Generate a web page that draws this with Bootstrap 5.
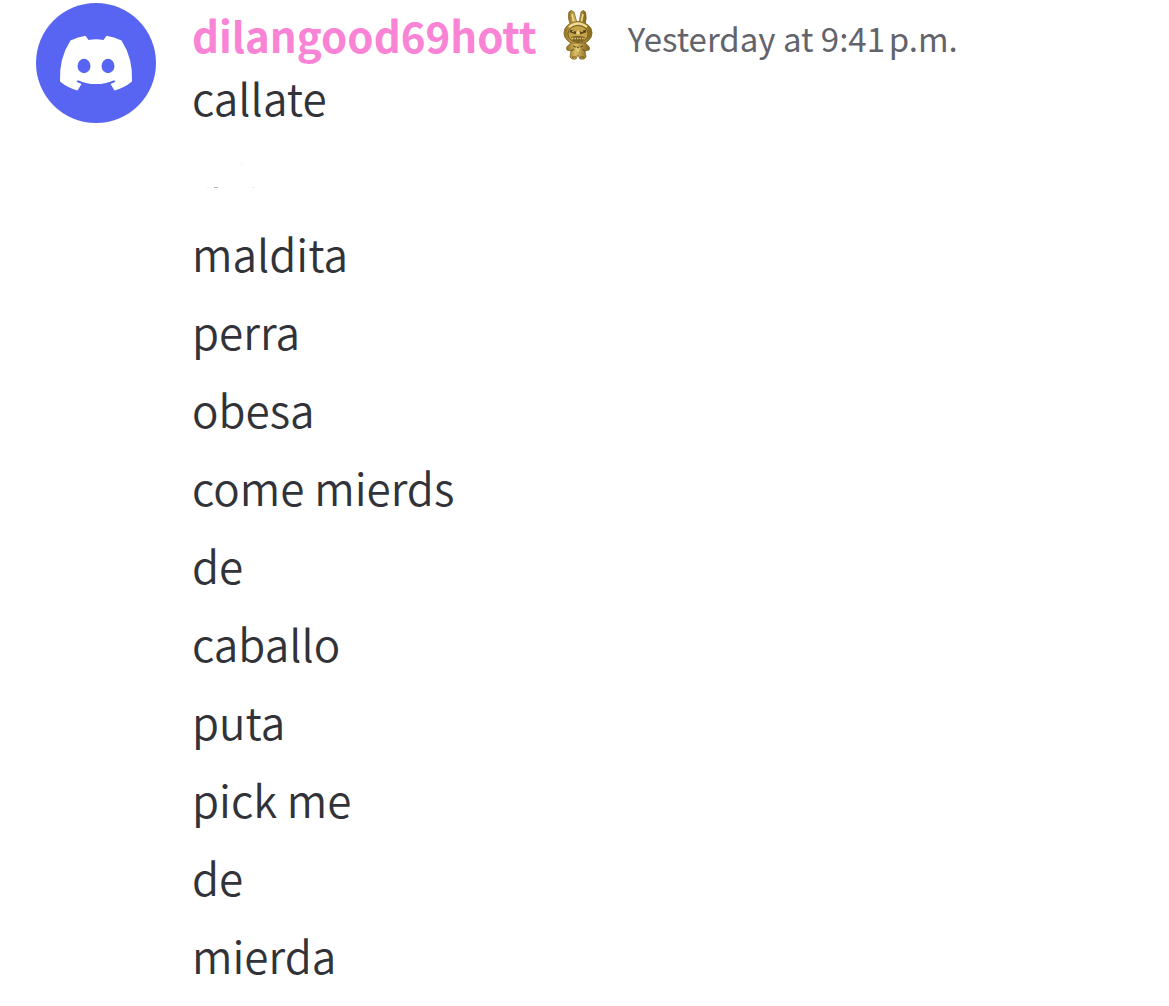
<!DOCTYPE html>
<html lang="es">
<head>
<meta charset="utf-8">
<meta name="viewport" content="width=device-width, initial-scale=1">
<title>Chat</title>
<link href="https://cdn.jsdelivr.net/npm/bootstrap@5.3.0/dist/css/bootstrap.min.css" rel="stylesheet">
<style>
body{background:#fff;color:#323339;font-family:"Noto Sans CJK SC","Noto Sans",sans-serif}
.chat-group{padding:3px 36px 0;gap:36px}
.avatar{width:120px;height:120px}
.chat-head{height:55px;gap:26px;line-height:56px;padding-top:8px}
.user-name{color:#f984d6;font-size:42px;font-weight:700}
.user-name:hover{color:#f984d6}
.tag-icon{width:30px;height:52px}
.sent-at{color:#62636b;font-size:33px;margin-left:9px;padding-top:6px}
.chat-line{font-size:44px;font-weight:350;line-height:78px;height:78px}
</style>
</head>
<body>
<main class="chat-group d-flex align-items-start">
<svg class="avatar flex-shrink-0" viewBox="0 0 120 120" role="img" aria-label="Avatar">
<circle cx="60" cy="60" r="60" fill="#5865f2"/>
<path fill="#fff" d="M34.500 37.500Q42 34 49.500 32.700L52.500 37Q60 35.500 67.500 37L70.500 32.700Q78 34 85.500 37.500Q97 55 96 78.500Q88 85 78.500 87.500L74.500 81Q77 80 79.500 78.500L78 77.200Q60 85 42 77.200L40.500 78.500Q43 80 45.500 81L41.500 87.500Q32 85 24 78.500Q23 55 34.500 37.500Z"/>
<ellipse cx="48" cy="63" rx="6.500" ry="7.200" fill="#5865f2"/><ellipse cx="72" cy="63" rx="6.500" ry="7.200" fill="#5865f2"/>
</svg>
<div class="flex-grow-1">
<header class="chat-head d-flex align-items-center">
<a href="#" class="user-name text-decoration-none">dilangood69hott</a>
<svg class="tag-icon flex-shrink-0" viewBox="0 0 30 52" role="img" aria-label="Golden figure">
<defs><linearGradient id="gold" x1="0" x2="1"><stop offset="0" stop-color="#8d7022"/><stop offset=".4" stop-color="#d9bd62"/><stop offset="1" stop-color="#806018"/></linearGradient></defs>
<path fill="url(#gold)" stroke="#80641f" stroke-width=".8" d="M8 17Q4 8 6 3Q8 0 11 3L14 14L16 14L18 3Q20 0 22.500 3Q24 8 22 17Z"/>
<path stroke="#f0dc94" stroke-width="1.500" fill="none" d="M9 5L11 15M20 5L18 15"/>
<ellipse cx="15" cy="24" rx="14" ry="11.500" fill="url(#gold)" stroke="#8d7022"/>
<ellipse cx="15" cy="25" rx="10" ry="8.500" fill="#c6a448" stroke="#786021"/>
<path d="M6 18Q15 11 24 18" stroke="#efdd9b" stroke-width="2" fill="none"/>
<path d="M7 22L13 24M17 24L23 22" stroke="#574315" stroke-width="2.600"/>
<path d="M13 24L15 21L17 24L15 26Z" fill="#e9d48b"/>
<circle cx="10" cy="22.500" r=".7" fill="#f3e3a4"/><circle cx="19" cy="22.500" r=".7" fill="#f3e3a4"/>
<path d="M8 28Q15 26 22 28L20 32Q15 34 10 32Z" fill="#7c6326"/><path d="M9 29.500H21" stroke="#dfc676" stroke-width="1.500" stroke-dasharray="1.500 1"/>
<path fill="url(#gold)" stroke="#80641f" stroke-width=".8" d="M8 34Q2 38 4 41L8 42L7 48Q8 51 13 50L15 46L17 50Q22 51 23 48L22 42L26 41Q28 38 22 34Z"/>
<path d="M10 37Q15 40 20 37M8 42L11 40M22 42L19 40M9 48H13M17 48H21" stroke="#705620" stroke-width="1.200" fill="none"/>
<path d="M13 38L15 43L17 38" stroke="#ead58a" fill="none"/>
</svg>
<time class="sent-at text-nowrap">Yesterday at 9:41&#8239;p.m.</time>
</header>
<div class="chat-line">callate</div>
<div class="chat-line" aria-hidden="true"><svg class="d-block" width="70" height="70" viewBox="0 0 70 70"><path d="M22 51.500H26" stroke="#b5b5b5"/><path d="M15 51.500H17M19 52.500H20M60 51.500H63M49 27.500H51" stroke="#eee"/></svg></div>
<div class="chat-line">maldita</div>
<div class="chat-line">perra</div>
<div class="chat-line">obesa</div>
<div class="chat-line">come mierds</div>
<div class="chat-line">de</div>
<div class="chat-line">caballo</div>
<div class="chat-line">puta</div>
<div class="chat-line">pick me</div>
<div class="chat-line">de</div>
<div class="chat-line">mierda</div>
</div>
</main>
<script src="https://cdn.jsdelivr.net/npm/bootstrap@5.3.0/dist/js/bootstrap.bundle.min.js"></script>
</body>
</html>
